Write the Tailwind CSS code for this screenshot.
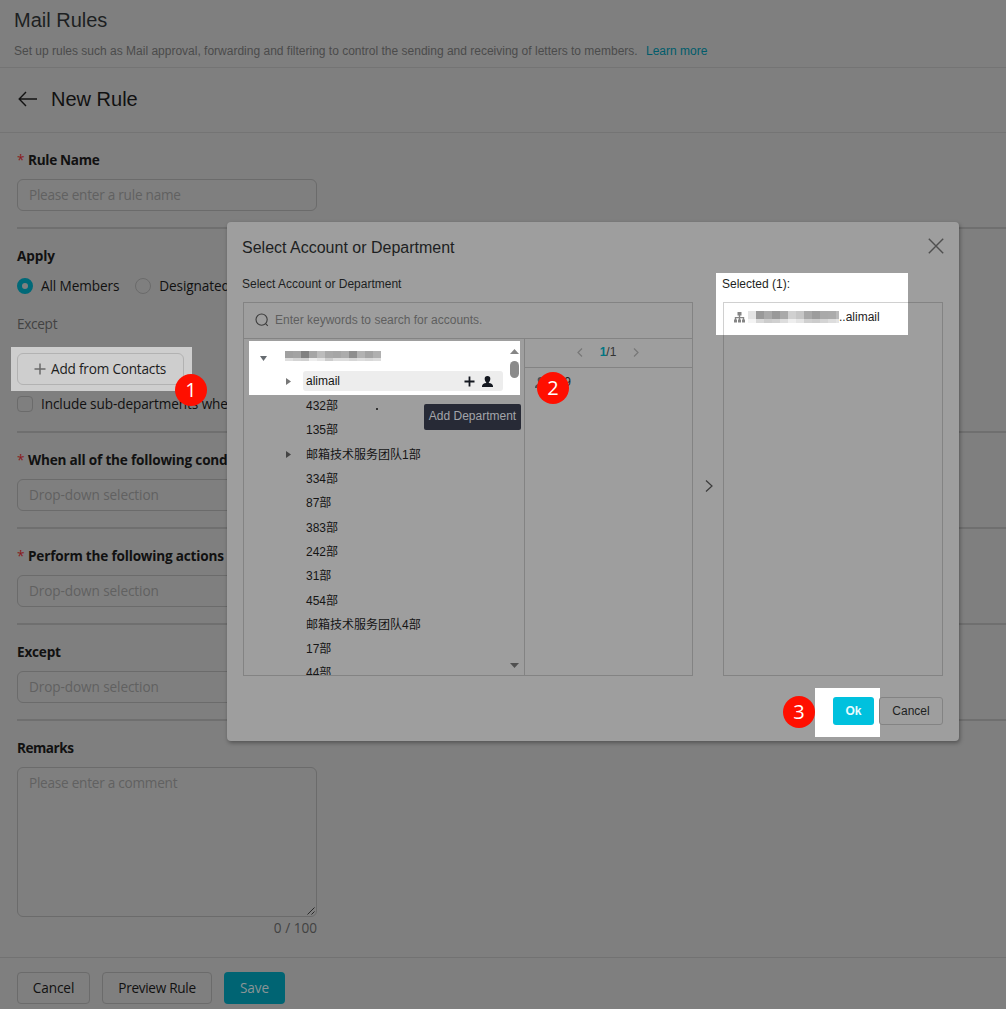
<!DOCTYPE html>
<html lang="en">
<head>
    <meta charset="UTF-8">
    <meta name="viewport" content="width=device-width, initial-scale=1.0">
    <title>Mail Rules</title>
    <script src="https://cdn.jsdelivr.net/npm/@tailwindcss/browser@4"></script>
</head>
<body class="relative w-[1006px] h-[1009px] overflow-hidden bg-[#7f7f7f] text-[#111] font-['Open_Sans','Noto_Sans_CJK_SC',sans-serif] text-[13.6px] leading-[22px] tracking-[-0.1px]">

    <!-- Page header -->
    <header class="h-[68px] border-b border-[#747474] pl-3.5 pt-1.5 font-['Liberation_Sans',sans-serif] tracking-normal">
        <h1 class="text-xl leading-7 text-[#1d1f22]">Mail Rules</h1>
        <p class="mt-2 text-xs leading-[18px] text-[#4b4b4b]">Set up rules such as Mail approval, forwarding and filtering to control the sending and receiving of letters to members. <a class="ml-[5px] text-[#005c6b]">Learn more</a></p>
    </header>
    <div class="flex h-[65px] items-center border-b border-[#747474] pl-[18px]">
        <svg class="mb-[3px] h-5 w-5" viewBox="0 0 20 20" fill="none" stroke="#141414" stroke-width="1.4"><path d="M19 10H1.5M8 3L1.2 10L8 17"/></svg>
        <h2 class="ml-[13px] pb-0.5 font-['Liberation_Sans',sans-serif] text-xl leading-7 tracking-normal">New Rule</h2>
    </div>

    <!-- Rule form -->
    <main class="pl-[17px]">
        <section class="py-4">
            <h3 class="mb-2 font-bold tracking-[-0.3px]"><span class="mr-[5px] inline-block w-1.5 font-normal text-[#8a1a20]">*</span>Rule Name</h3>
            <div class="h-8 w-[300px] rounded-md border border-[#6b6b6b] px-[11px] py-1 text-[#616161] tracking-[-0.25px]">Please enter a rule name</div>
        </section>

        <section class="border-t-2 border-[#6f6f6f] py-4">
            <h3 class="mb-2 font-bold">Apply</h3>
            <div class="flex items-center">
                <span class="h-4 w-4 rounded-full border-5 border-[#006978] bg-[#808080]"></span>
                <span class="ml-2">All Members</span>
                <span class="ml-4 h-4 w-4 rounded-full border border-[#6b6b6b]"></span>
                <span class="ml-2">Designated Members</span>
            </div>
            <p class="mt-4 text-[#424242] tracking-[-0.3px]">Except</p>
            <div class="relative mt-3 flex h-11 w-[181px] -ml-1.5 bg-[#cecece] p-1.5">
                <div class="flex h-8 w-[167px] items-center rounded-md border border-[#b2b2b2] pl-4 text-[#1d1d1d] tracking-[-0.2px]">
                    <svg class="mr-[5px] h-3 w-3" viewBox="0 0 12 12" stroke="#6a6a6a" stroke-width="1.5"><path d="M6 .5v11M.5 6h11"/></svg>
                    Add from Contacts
                </div>
                <span class="absolute left-[164px] top-[27px] flex h-8 w-8 items-center justify-center rounded-full bg-[#ff0f00] text-xl text-white">1</span>
            </div>
            <div class="mt-0.5 flex items-center">
                <span class="h-4 w-4 rounded-[4px] border border-[#6b6b6b]"></span>
                <span class="ml-2">Include sub-departments when</span>
            </div>
        </section>

        <section class="border-t-2 border-[#6f6f6f] py-4">
            <h3 class="mb-2 font-bold tracking-[-0.2px]"><span class="mr-[5px] inline-block w-1.5 font-normal text-[#8a1a20]">*</span>When all of the following conditions are met</h3>
            <div class="h-8 w-[300px] rounded-md border border-[#6b6b6b] px-[11px] py-1 text-[#616161]">Drop-down selection</div>
        </section>

        <section class="border-t-2 border-[#6f6f6f] py-4">
            <h3 class="mb-2 font-bold tracking-[-0.2px]"><span class="mr-[5px] inline-block w-1.5 font-normal text-[#8a1a20]">*</span>Perform the following actions</h3>
            <div class="h-8 w-[300px] rounded-md border border-[#6b6b6b] px-[11px] py-1 text-[#616161]">Drop-down selection</div>
        </section>

        <section class="border-t-2 border-[#6f6f6f] py-4">
            <h3 class="mb-2 font-bold tracking-[-0.2px]">Except</h3>
            <div class="h-8 w-[300px] rounded-md border border-[#6b6b6b] px-[11px] py-1 text-[#616161]">Drop-down selection</div>
        </section>

        <section class="h-[238px] border-t-2 border-[#6f6f6f] pt-4">
            <h3 class="mb-2 font-bold tracking-[-0.5px]">Remarks</h3>
            <div class="relative h-[150px] w-[300px] rounded-md border border-[#6b6b6b] px-[11px] py-1 text-[#616161] tracking-[-0.25px]">
                Please enter a comment
                <svg class="absolute bottom-px right-px h-2 w-2" viewBox="0 0 8 8" stroke="#2a2a2a" stroke-width="1"><path d="M.5 7.5l7-7M4.5 7.5l3-3"/></svg>
            </div>
            <div class="w-[300px] text-right text-[#424242] tracking-normal">0 / 100</div>
        </section>
    </main>

    <footer class="flex border-t border-[#727272] pl-[17px] pt-3.5">
        <div class="flex h-8 w-[73px] items-center justify-center rounded-[4px] border border-[#6b6b6b]">Cancel</div>
        <div class="ml-3 flex h-8 w-[110px] items-center justify-center rounded-[4px] border border-[#6b6b6b] tracking-[-0.3px]">Preview Rule</div>
        <div class="ml-3 flex h-8 w-[61px] items-center justify-center rounded-[4px] bg-[#006473] text-[#8b9496]">Save</div>
    </footer>

    <!-- Account picker dialog -->
    <div class="absolute left-[227px] top-[222px] h-[519px] w-[732px] rounded-[4px] bg-[#9e9e9e] px-4 font-['Liberation_Sans','Noto_Sans_CJK_SC',sans-serif] text-xs leading-[18px] tracking-normal text-[#1d1f22] shadow-[1px_2px_4px_rgba(0,0,0,0.35)]">
        <div class="flex h-[51px] items-center justify-between">
            <h2 class="-ml-px text-base leading-6">Select Account or Department</h2>
            <svg class="-mr-px -mt-[3px] h-4 w-4" viewBox="0 0 16 16" stroke="#4f4f4f" stroke-width="1.4"><path d="M.8.8l14.4 14.4M15.2.8L.8 15.2"/></svg>
        </div>

        <div class="flex">
            <div class="w-[450px]">
                <div class="-ml-px h-[29px] pt-0.5">Select Account or Department</div>
                <div class="flex h-[374px] flex-col border border-[#838383]">
                    <div class="flex h-9 shrink-0 items-center border-b border-[#838383] pb-0.5 pl-[11px] text-[#5e5e5e]">
                        <svg class="mr-1.5 mt-px h-[14px] w-[14px]" viewBox="0 0 14 14" fill="none" stroke="#3c3c3c" stroke-width="1.1"><circle cx="6.6" cy="6.6" r="5.6"/><path d="M10.8 10.8l2 2"/></svg>
                        Enter keywords to search for accounts.
                    </div>
                    <div class="flex min-h-0 flex-1">
                        <!-- Department tree -->
                        <div class="relative w-[281px] overflow-hidden border-r border-[#838383] pl-[5px] pt-0.5 text-[#151515]">
                            <div class="h-[54px] w-[271px] bg-white">
                                <div class="flex h-[30px] items-center pl-[11px]">
                                    <svg class="mt-1 h-[5px] w-[7px]" viewBox="0 0 7 5" fill="#666b70"><path d="M0 0h7L3.5 5z"/></svg>
                                    <div id="tenant" class="ml-[18px] flex"></div>
                                </div>
                                <div class="flex h-5 items-center pl-[37px]">
                                    <svg class="h-[7px] w-[5px]" viewBox="0 0 5 7" fill="#777"><path d="M0 0v7l5-3.5z"/></svg>
                                    <div class="ml-3 flex h-5 w-[200px] items-center rounded-[3px] bg-[#ededed] pl-[3px]">
                                        <span class="w-[158px]">alimail</span>
                                        <svg class="h-[11px] w-[11px]" viewBox="0 0 11 11" stroke="#141820" stroke-width="1.8"><path d="M5.500 .5v10M.5 5.500h10"/></svg>
                                        <svg class="ml-[7px] h-[11px] w-[11px]" viewBox="0 0 11 11" fill="#141820"><path d="M5.500 0a2.800 2.800 0 0 1 2.800 3c0 1.500-.8 2.900-1.500 3.400v.6c2.500.3 4.200 1.300 4.200 3.300v.7H0v-.7c0-2 1.700-3 4.200-3.300v-.6C3.500 5.900 2.700 4.500 2.700 3A2.800 2.800 0 0 1 5.500 0z"/></svg>
                                    </div>
                                </div>
                            </div>
                            <div id="tree" class="-mt-px pl-[37px]"></div>
                            <!-- Scrollbar -->
                            <div class="absolute right-0 top-0 flex h-full w-[19px] flex-col items-center">
                                <svg class="mt-[10px] h-[5px] w-[9px]" viewBox="0 0 9 5" fill="#858585"><path d="M4.500 0L9 5H0z"/></svg>
                                <div class="mt-[7px] h-[17px] w-[9px] rounded-full bg-[#8b8b8b]"></div>
                                <svg class="mb-[7px] mt-auto h-[5px] w-[9px]" viewBox="0 0 9 5" fill="#505050"><path d="M0 0h9L4.500 5z"/></svg>
                            </div>
                        </div>
                        <!-- Accounts of the department -->
                        <div class="flex-1">
                            <div class="flex h-[29px] items-center justify-center border-b border-[#838383] pb-0.5 pr-px">
                                <svg class="h-[9px] w-[6px]" viewBox="0 0 6 9" fill="none" stroke="#777" stroke-width="1.2"><path d="M5 .5l-4 4 4 4"/></svg>
                                <span class="w-[50px] text-center text-[#333]"><span class="font-bold text-[#007684]">1</span>/1</span>
                                <svg class="h-[9px] w-[6px]" viewBox="0 0 6 9" fill="none" stroke="#777" stroke-width="1.2"><path d="M1 .5l4 4-4 4"/></svg>
                            </div>
                            <div class="relative flex h-7 items-center pl-2.5">
                                <svg class="h-[11px] w-[11px]" viewBox="0 0 11 11" fill="#505050"><path d="M5.500 0a2.800 2.800 0 0 1 2.800 3c0 1.500-.8 2.900-1.500 3.400v.6c2.500.3 4.200 1.300 4.200 3.300v.7H0v-.7c0-2 1.700-3 4.200-3.300v-.6C3.500 5.900 2.700 4.500 2.700 3A2.800 2.800 0 0 1 5.500 0z"/></svg>
                                <span class="ml-[5px] w-5 text-right">139</span>
                                <span class="absolute left-3 top-1 flex h-8 w-8 items-center justify-center rounded-full bg-[#ff0f00] font-['Open_Sans',sans-serif] text-xl text-white">2</span>
                            </div>
                        </div>
                    </div>
                </div>
            </div>

            <div class="flex w-[30px] items-center justify-center pl-px pt-[22px]">
                <svg class="h-3 w-2" viewBox="0 0 8 12" fill="none" stroke="#3c3c3c" stroke-width="1.2"><path d="M1 .5L7 6l-6 5.500"/></svg>
            </div>

            <!-- Selected items -->
            <div class="relative w-[220px]">
                <div class="absolute -left-[7px] top-0 h-[62px] w-[192px] bg-white"></div>
                <div class="relative -ml-px h-[29px] pt-0.5">Selected (1):</div>
                <div class="relative h-[374px] border border-[#838383]">
                    <div class="absolute -left-px -top-px h-[33px] w-[185px] border-l border-t border-[#d0d0d0] bg-white"></div>
                    <div class="relative flex h-7 items-center pl-2.5 text-[#1d1d1d]">
                        <svg class="h-[11px] w-[11px]" viewBox="0 0 11 11" fill="#858585"><path d="M3.500 0h4v3.500H6.200v1.500H10.200v2.500H11v3H8v-3h.8V6.200H6.200v1.300H7v3H4v-3h.8V6.200H2.200v1.300H3v3H0v-3h.8V5h4V3.500H3.500z"/></svg>
                        <div id="picked" class="ml-[3px] flex w-[91px] overflow-hidden"></div>
                        <span>..alimail</span>
                    </div>
                </div>
            </div>
        </div>

        <div class="relative mt-[21px] flex justify-end">
            <div class="absolute right-[63px] -top-[9px] h-[49px] w-[65px] bg-white"></div>
            <div class="relative flex h-7 w-[41px] items-center justify-center rounded-[3px] bg-[#00c1de] font-bold text-[#eafcff]">Ok</div>
            <div class="relative ml-[5px] flex h-7 w-16 items-center justify-center rounded-[3px] border border-[#838383]">Cancel</div>
            <span class="absolute right-[128px] -top-px flex h-8 w-8 items-center justify-center rounded-full bg-[#ff0f00] font-['Open_Sans',sans-serif] text-xl text-white">3</span>
        </div>

        <!-- Tooltip and stray cursor dot -->
        <div class="absolute left-[197px] top-[182px] flex h-[26px] w-[97px] justify-center rounded-[2px] bg-[#272a36] pt-[3px] text-[#a3a5aa] whitespace-nowrap">Add Department</div>
        <div class="absolute left-[149px] top-[186px] h-[2px] w-[2px] bg-[#333]"></div>
    </div>

    <script>
        // Child departments; the ones with children get an arrow
        const departments = [
            ["432部"], ["135部"], ["邮箱技术服务团队1部", true], ["334部"], ["87部"], ["383部"],
            ["242部"], ["31部"], ["454部"], ["邮箱技术服务团队4部"], ["17部"], ["44部"]
        ];
        const arrow = '<svg class="h-[7px] w-[5px]" viewBox="0 0 5 7" fill="#444"><path d="M0 0v7l5-3.5z"/></svg>';
        document.getElementById('tree').innerHTML = departments.map(([name, open]) => `
            <div class="flex h-[24.3px] items-center">
                <span class="w-5">${open ? arrow : ''}</span><span>${name}</span>
            </div>`).join('');

        // Masked names: a mosaic of grey squares, one line per row
        function mosaic(id, rows) {
            document.getElementById(id).innerHTML = '<div>' + rows.map(([h, colors]) =>
                '<div class="flex">' + colors.map(c =>
                    `<i class="shrink-0" style="width:8px;height:${h}px;background:${c}"></i>`).join('') + '</div>').join('') + '</div>';
        }
        mosaic('tenant', [
            [7, ["#a0a0a0", "#a3a3a3", "#808080", "#a6a6a6", "#bcbcbc", "#a9a9a9", "#a6a6a6", "#acacac", "#8e8e8e", "#b2b2b2", "#a4a4a4", "#b0b0b0"]],
            [3, ["#dedede", "#d4d4d4", "#d0d0d0", "#eee", "#e4e4e4", "#ccc", "#ddd", "#ddd", "#d6d6d6", "#ddd", "#d8d8d8", "#ddd"]]
        ]);
        mosaic('picked', [
            [8, ["#e4e4e4", "#999", "#a9a9a9", "#999", "#a9a9a9", "#d0d0d0", "#c6c6c6", "#a8a8a8", "#9c9c9c", "#aaa", "#ababab", "#bababa"]],
            [4, ["#f4f4f4", "#d8d8d8", "#ccc", "#d0d0d0", "#ddd", "#eee", "#e4e4e4", "#d0d0d0", "#ccc", "#d4d4d4", "#ddd", "#e4e4e4"]]
        ]);
    </script>
</body>
</html>
